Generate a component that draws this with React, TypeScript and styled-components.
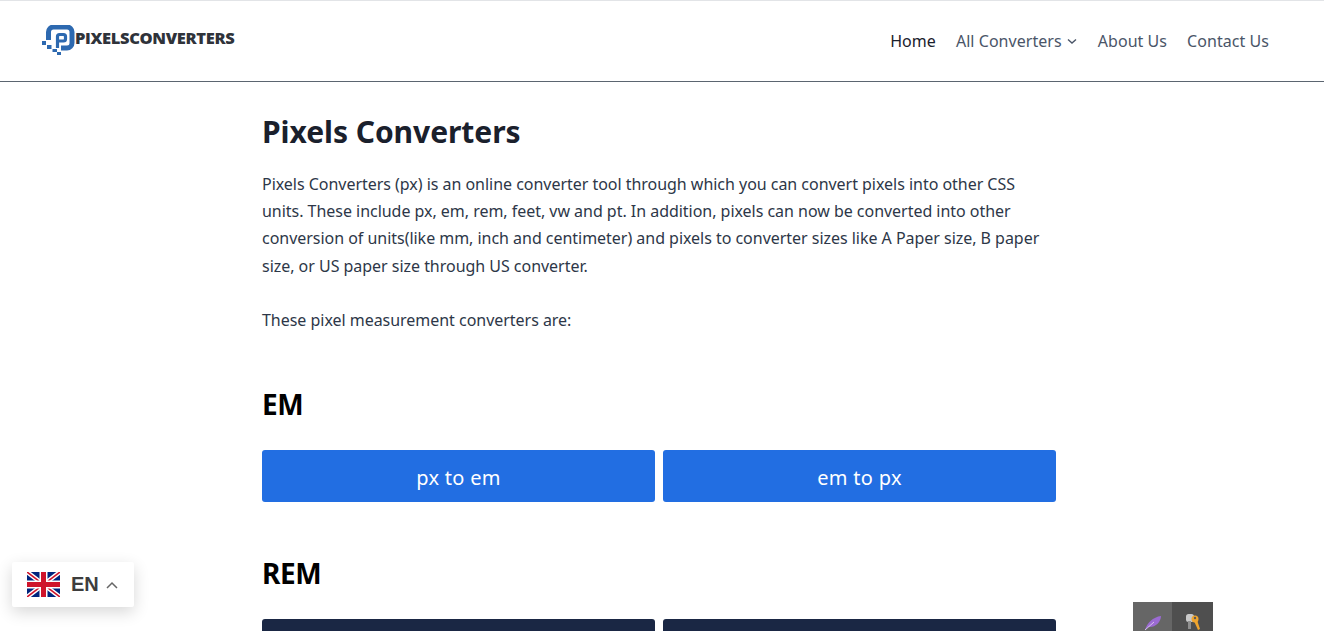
import React from 'react';
import styled, { createGlobalStyle } from 'styled-components';

const GlobalStyle = createGlobalStyle`
  html, body {
    margin: 0;
    padding: 0;
    height: 631px;
    overflow: hidden;
    background: #ffffff;
    font-family: 'Noto Sans', 'Open Sans', sans-serif;
  }
`;

const Page = styled.div`
  position: relative;
  height: 631px;
  overflow: hidden;
  border-top: 1px solid #e2e4e7;
  box-sizing: border-box;
`;

const Header = styled.header`
  height: 81px;
  box-sizing: border-box;
  padding: 0 55px 0 42px;
  display: flex;
  justify-content: space-between;
  align-items: flex-start;
  border-bottom: 1px solid #5b6570;
`;

const Logo = styled.div`
  display: flex;
  align-items: center;
  gap: 0;
  margin-top: 24px;
`;

const LogoText = styled.span`
  font-family: 'Open Sans', sans-serif;
  font-weight: 800;
  font-size: 16.5px;
  letter-spacing: -0.35px;
  color: #2f333a;
  margin-top: -6px;
`;

const Nav = styled.nav`
  display: flex;
  gap: 20px;
  margin-top: 29px;
`;

const NavLink = styled.a<{ $active?: boolean }>`
  display: flex;
  align-items: center;
  gap: 4px;
  font-size: 16px;
  line-height: 22px;
  letter-spacing: 0.05px;
  color: ${p => (p.$active ? '#1a202c' : '#4a5568')};
`;

const Main = styled.main`
  width: 794px;
  margin-left: 262px;
  padding-top: 29px;
`;

const Title = styled.h1`
  margin: 0 0 18px;
  font-size: 30px;
  line-height: 42px;
  font-weight: 700;
  letter-spacing: -0.05px;
  color: #1a202c;
`;

const Para = styled.p`
  margin: 0 0 27px;
  font-size: 16px;
  line-height: 27.2px;
  letter-spacing: -0.03px;
  color: #2d3748;
`;

const SectionTitle = styled.h2<{ $first?: boolean }>`
  margin: ${p => (p.$first ? '50px' : '51px')} 0 26px;
  font-size: 28px;
  line-height: 40px;
  font-weight: 700;
  letter-spacing: -0.4px;
  color: #000000;
`;

const ButtonRow = styled.div`
  display: grid;
  grid-template-columns: 1fr 1fr;
  gap: 8px;
`;

const ConvertButton = styled.a<{ $dark?: boolean }>`
  height: 52px;
  box-sizing: border-box;
  padding-top: 3px;
  display: flex;
  align-items: center;
  justify-content: center;
  border-radius: 3px;
  font-size: 20px;
  letter-spacing: 0.3px;
  color: #ffffff;
  background: ${p => (p.$dark ? '#1a2744' : '#226ee2')};
`;

const LangSwitcher = styled.div`
  position: absolute;
  left: 12px;
  top: 561px;
  width: 122px;
  height: 45px;
  box-sizing: border-box;
  padding-left: 15px;
  display: flex;
  align-items: center;
  background: #ffffff;
  border-radius: 2px;
  box-shadow: 0 5px 16px rgba(0, 0, 0, 0.16);
`;

const LangLabel = styled.span`
  margin-left: 11px;
  font-family: 'Liberation Sans', sans-serif;
  font-weight: 700;
  font-size: 20px;
  color: #3d3d3d;
`;

const Chevron = styled.svg`
  margin-left: 6px;
`;

const ExtensionBar = styled.div`
  position: absolute;
  left: 1133px;
  top: 601px;
  display: flex;
  height: 30px;
`;

const ExtensionTile = styled.div<{ $light?: boolean }>`
  width: ${p => (p.$light ? '39px' : '41px')};
  display: flex;
  align-items: flex-end;
  justify-content: center;
  background: ${p => (p.$light ? '#666666' : '#4f4f4f')};
`;

const LogoMark = () => (
  <svg width="33" height="31" viewBox="0 0 33 31" aria-hidden="true">
    <path
      d="M6.5 15 V7 a5 5 0 0 1 5-5 H25 a5 5 0 0 1 5 5 V18 a5 5 0 0 1-5 5 H19"
      fill="none"
      stroke="#2d69b0"
      strokeWidth="5"
    />
    <path
      d="M15.5 23 V11.5 a2 2 0 0 1 2-2 H21.5 a2 2 0 0 1 2 2 V14 a2 2 0 0 1-2 2 H15.5"
      fill="none"
      stroke="#2d69b0"
      strokeWidth="3.2"
    />
    <path
      fill="#2d69b0"
      d="M0 16 h4 v4 h-4 z M5 20 h4.5 v4 h-4.5 z M10.5 24 h4.5 v3 h-4.5 z M15 27 h4 v3 h-4 z"
    />
  </svg>
);

const UkFlag = () => (
  <svg width="33" height="25" viewBox="0 0 33 25" aria-hidden="true">
    <rect width="33" height="25" rx="2" fill="#00247d" />
    <path d="M0 0 L33 25 M33 0 L0 25" stroke="#ffffff" strokeWidth="4.5" />
    <path d="M0 0 L33 25 M33 0 L0 25" stroke="#cf142b" strokeWidth="1.6" />
    <path d="M16.5 0 V25 M0 12.5 H33" stroke="#ffffff" strokeWidth="8" />
    <path d="M16.5 0 V25 M0 12.5 H33" stroke="#cf142b" strokeWidth="5" />
  </svg>
);

const Feather = () => (
  <svg width="20" height="18" viewBox="0 0 20 18" aria-hidden="true" style={{ marginBottom: 1 }}>
    <path d="M2 17 C4 10 10 4 18 3 C18 9 12 15 5 14 Z" fill="#9b6bd3" />
    <path d="M2 17 L11 9" stroke="#d9c4f0" strokeWidth="1" />
  </svg>
);

const Keys = () => (
  <svg width="18" height="18" viewBox="0 0 18 18" aria-hidden="true" style={{ marginBottom: 1 }}>
    <rect x="2" y="1" width="8" height="8" rx="2.5" fill="#c9c9c9" />
    <rect x="4" y="8" width="3" height="8" fill="#8f8f8f" />
    <circle cx="11" cy="6" r="3.5" fill="#f0a52e" />
    <circle cx="11" cy="5" r="1.2" fill="#5a5a5a" />
    <path d="M10 8 L14 17 L16 16 L13 7 Z" fill="#f0a52e" />
  </svg>
);

export default function App() {
  return (
    <>
      <GlobalStyle />
      <Page>
        <Header>
          <Logo>
            <LogoMark />
            <LogoText>PIXELSCONVERTERS</LogoText>
          </Logo>
          <Nav>
            <NavLink $active>Home</NavLink>
            <NavLink>
              All Converters
              <svg width="12" height="12" viewBox="0 0 12 12" aria-hidden="true">
                <path d="M2 4.5 L6 8 L10 4.5" fill="none" stroke="#4a5568" strokeWidth="1.4" />
              </svg>
            </NavLink>
            <NavLink>About Us</NavLink>
            <NavLink>Contact Us</NavLink>
          </Nav>
        </Header>
        <Main>
          <Title>Pixels Converters</Title>
          <Para>
            Pixels Converters (px) is an online converter tool through which you can convert pixels into other CSS
            units. These include px, em, rem, feet, vw and pt. In addition, pixels can now be converted into other
            conversion of units(like mm, inch and centimeter) and pixels to converter sizes like A Paper size, B paper
            size, or US paper size through US converter.
          </Para>
          <Para>These pixel measurement converters are:</Para>
          <SectionTitle $first>EM</SectionTitle>
          <ButtonRow>
            <ConvertButton>px to em</ConvertButton>
            <ConvertButton>em to px</ConvertButton>
          </ButtonRow>
          <SectionTitle>REM</SectionTitle>
          <ButtonRow>
            <ConvertButton $dark />
            <ConvertButton $dark />
          </ButtonRow>
        </Main>
        <LangSwitcher>
          <UkFlag />
          <LangLabel>EN</LangLabel>
          <Chevron width="14" height="10" viewBox="0 0 14 10" aria-hidden="true">
            <path d="M2 8 L7 3 L12 8" fill="none" stroke="#666666" strokeWidth="1.5" />
          </Chevron>
        </LangSwitcher>
        <ExtensionBar>
          <ExtensionTile $light>
            <Feather />
          </ExtensionTile>
          <ExtensionTile>
            <Keys />
          </ExtensionTile>
        </ExtensionBar>
      </Page>
    </>
  );
}
